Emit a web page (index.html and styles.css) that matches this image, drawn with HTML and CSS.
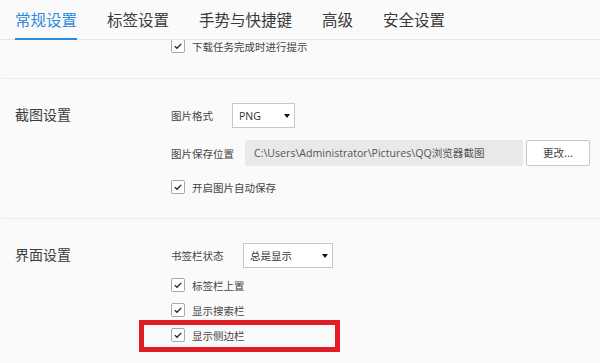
FILE: index.html
```html
<!DOCTYPE html>
<html lang="zh-CN">
<head>
<meta charset="utf-8">
<link rel="stylesheet" href="styles.css">
</head>
<body>
<div class="tabs">
  <div class="tab active">常规设置</div>
  <div class="tab">标签设置</div>
  <div class="tab">手势与快捷键</div>
  <div class="tab">高级</div>
  <div class="tab">安全设置</div>
</div>
<div class="content">
  <div class="section first">
    <div class="title"></div>
    <div class="rows">
      <div class="check-row top"><span class="cb"><svg viewBox="0 0 13 13"><path d="M3 6.6 L5.4 9 L10 4.2" /></svg></span><span class="lbl">下载任务完成时进行提示</span></div>
    </div>
  </div>
  <div class="section">
    <div class="title">截图设置</div>
    <div class="rows">
      <div class="field-row">
        <span class="lbl field-lbl">图片格式</span>
        <div class="select png"><span>PNG</span><span class="arrow"></span></div>
      </div>
      <div class="field-row path-row">
        <span class="lbl field-lbl">图片保存位置</span>
        <div class="path">C:\Users\Administrator\Pictures\QQ浏览器截图</div>
        <div class="btn">更改...</div>
      </div>
      <div class="check-row save"><span class="cb"><svg viewBox="0 0 13 13"><path d="M3 6.6 L5.4 9 L10 4.2" /></svg></span><span class="lbl">开启图片自动保存</span></div>
    </div>
  </div>
  <div class="section last">
    <div class="title">界面设置</div>
    <div class="rows">
      <div class="field-row">
        <span class="lbl field-lbl">书签栏状态</span>
        <div class="select mode"><span>总是显示</span><span class="arrow"></span></div>
      </div>
      <div class="check-list">
        <div class="check-row"><span class="cb"><svg viewBox="0 0 13 13"><path d="M3 6.6 L5.4 9 L10 4.2" /></svg></span><span class="lbl">标签栏上置</span></div>
        <div class="check-row"><span class="cb"><svg viewBox="0 0 13 13"><path d="M3 6.6 L5.4 9 L10 4.2" /></svg></span><span class="lbl">显示搜索栏</span></div>
        <div class="check-row marked"><span class="cb"><svg viewBox="0 0 13 13"><path d="M3 6.6 L5.4 9 L10 4.2" /></svg></span><span class="lbl">显示侧边栏</span><span class="highlight"></span></div>
      </div>
    </div>
  </div>
</div>
</body>
</html>
```

FILE: styles.css
```css
* { box-sizing: border-box; }
html, body { margin: 0; padding: 0; }
body {
  width: 600px;
  height: 363px;
  overflow: hidden;
  background: #fafafa;
  font-family: "Noto Sans CJK SC", "Noto Sans", sans-serif;
  color: #444;
}
.tabs {
  display: flex;
  gap: 30px;
  height: 40px;
  padding-left: 15px;
  border-bottom: 1px solid #e6e6e6;
  background: #fafafa;
  position: relative;
  z-index: 2;
}
.tab {
  font-size: 15.5px;
  line-height: 38px;
  color: #3a3a3a;
  height: 40px;
  margin-bottom: -1px;
  white-space: nowrap;
}
.tab.active {
  color: #2b8ade;
  border-bottom: 2px solid #2b8ade;
}
.content {
  display: flex;
  flex-direction: column;
}
.section {
  display: flex;
  padding: 24px 0 24px 15px;
  border-top: 1px solid #ececec;
  margin-left: 1px;
}
.section.first {
  border-top: none;
  padding: 0 0 25px 15px;
  margin-top: -1px;
}
.section.last { padding-bottom: 0; }
.title {
  width: 157px;
  flex: none;
  font-size: 14px;
  line-height: 25px;
  color: #3c3c3c;
  margin-left: -1px;
  margin-top: -1px;
}
.rows {
  display: flex;
  flex-direction: column;
  margin-left: -1px;
}
.lbl {
  font-size: 10.5px;
  color: #444;
  white-space: nowrap;
}
.field-row {
  display: flex;
  align-items: center;
  height: 25px;
}
.field-lbl { width: 61px; }
.path-row { margin-top: 12px; height: 26px; }
.path-row .field-lbl { width: 74px; }
.select {
  display: flex;
  align-items: center;
  justify-content: space-between;
  height: 25px;
  background: #fff;
  border: 1px solid #c8c8c8;
  padding: 0 4px 0 6px;
  font-size: 10.5px;
  color: #333;
}
.select.png { width: 63px; font-family: "Open Sans", "Noto Sans", sans-serif; }
.select.mode { width: 90px; margin-left: 11px; }
.arrow {
  width: 0;
  height: 0;
  border-left: 3.5px solid transparent;
  border-right: 3.5px solid transparent;
  border-top: 4px solid #111;
}
.path {
  width: 278px;
  height: 26px;
  line-height: 26px;
  background: #e9e9e9;
  border-radius: 2px;
  padding-left: 9px;
  font-family: "Open Sans", "Noto Sans", "Noto Sans CJK SC", sans-serif;
  font-size: 10.6px;
  color: #555;
  white-space: nowrap;
}
.btn {
  margin-left: 3px;
  width: 64px;
  height: 26px;
  line-height: 24px;
  background: #fff;
  border: 1px solid #c8c8c8;
  border-radius: 2px;
  text-align: center;
  font-size: 10.5px;
  color: #444;
}
.check-row {
  display: flex;
  align-items: center;
  height: 14px;
  position: relative;
}
.check-row.save { margin-top: 14px; }
.cb {
  width: 14px;
  height: 14px;
  flex: none;
  border: 1px solid #a9a9a9;
  border-radius: 2px;
  background: #fff;
  margin-right: 7px;
  display: flex;
}
.cb svg { width: 12px; height: 12px; }
.cb path {
  fill: none;
  stroke: #222;
  stroke-width: 1.4;
}
.check-list {
  display: flex;
  flex-direction: column;
  gap: 11px;
  margin-top: 10px;
}
.highlight {
  position: absolute;
  left: -32px;
  top: -8px;
  width: 201px;
  height: 32px;
  border: 5px solid #e21c24;
}
```
